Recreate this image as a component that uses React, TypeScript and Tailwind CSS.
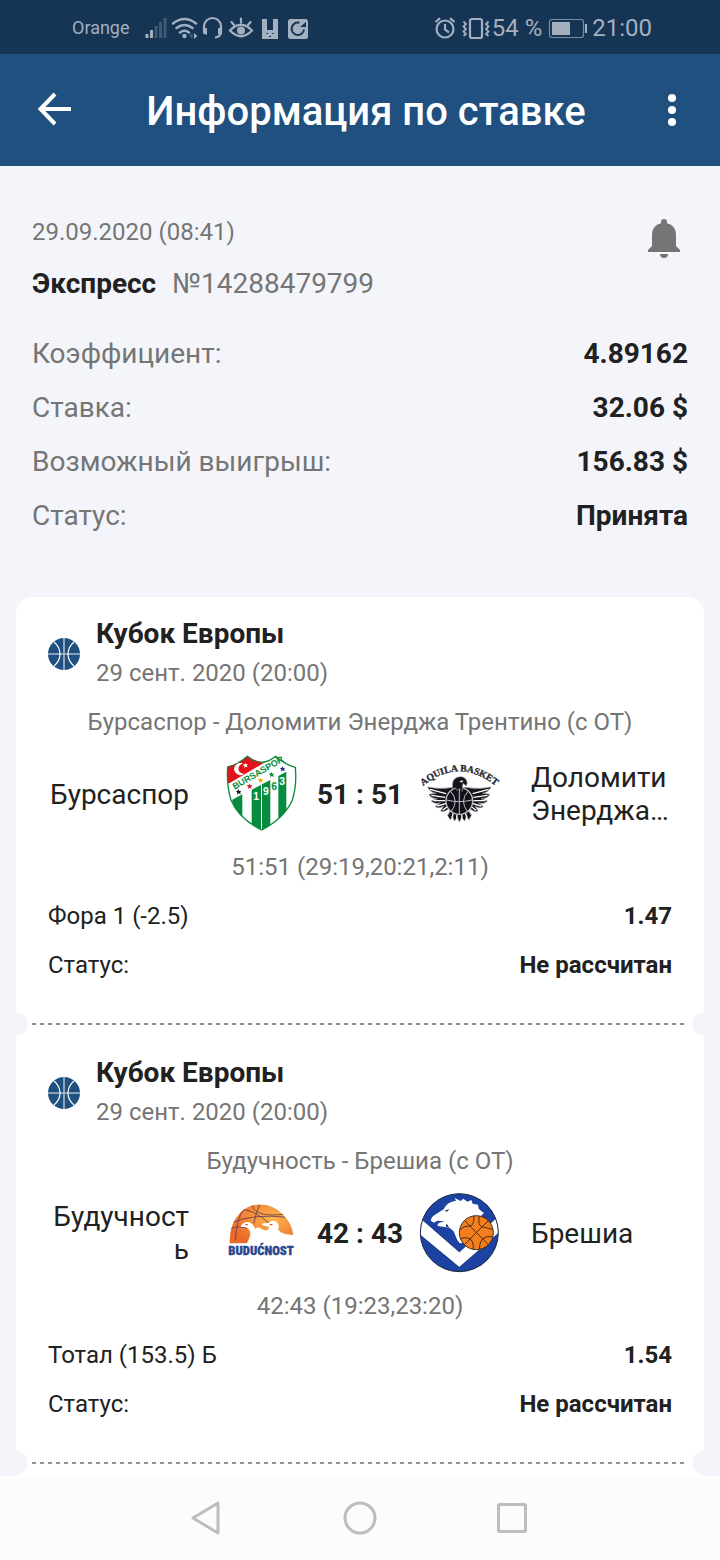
import type { ReactNode } from 'react'

const BET_ROWS = [
  { label: 'Коэффициент:', value: '4.89162' },
  { label: 'Ставка:', value: '32.06 $' },
  { label: 'Возможный выигрыш:', value: '156.83 $' },
  { label: 'Статус:', value: 'Принята' },
]

interface Game {
  id: number
  league: string
  date: string
  title: string
  home: string
  away: string
  homeLogo: ReactNode
  awayLogo: ReactNode
  score: string
  periods: string
  market: string
  odds: string
  status: string
}

function BursasporLogo() {
  return (
    <svg className="w-20 h-20" viewBox="18 27 240 240" role="img" aria-label="Бурсаспор">
      <defs>
        <clipPath id="bursa-shield">
          <path d="M38 66Q72 58 97 34Q118 51 140 52Q162 51 182 34Q208 58 241 67Q246 120 232 165Q208 220 140 255Q70 220 48 165Q34 120 38 66Z" />
        </clipPath>
      </defs>
      <g clipPath="url(#bursa-shield)">
        <path fill="#fff" d="M30 30h220v230H30z" />
        <g fill="#078c3f">
          <path d="M52 164L82 148V260H52z" />
          <path d="M110 134L138 120V260H110z" />
          <path d="M141 118L166 105V260H141z" />
          <path d="M190 93L214 80V260H190z" />
        </g>
        <path fill="#e3121b" d="M30 30h156L170 40L48 112L30 118z" />
      </g>
      <path d="M38 66Q72 58 97 34Q118 51 140 52Q162 51 182 34Q208 58 241 67Q246 120 232 165Q208 220 140 255Q70 220 48 165Q34 120 38 66Z" fill="none" stroke="#078c3f" strokeWidth="4" />
      <path d="M40 66Q72 58 97 36Q118 52 140 53" fill="none" stroke="#8f3a20" strokeWidth="3" />
      {/* crescent */}
      <path fill="#fff" d="M84 56A18 18 0 1 0 87 86A15 15 0 1 1 84 56z" />
      <path fill="#fff" d="M91 53l2 5 6-1-4 5 3 5-6-2-4 4v-6l-5-3 6-2z" />
      <text x="59" y="134" transform="rotate(-30 59 134)" fontFamily="Liberation Sans, sans-serif" fontSize="27" fontWeight="700" fill="#078c3f">BURSASPOR</text>
      <path fill="#111" d="M70 132l3 6 6-1-4 5 3 6-7-3-5 4 1-7-5-4 7-1z" />
      <path fill="#e3121b" d="M103 115l3 6 6-1-4 5 3 6-7-3-5 4 1-7-5-4 7-1z" />
      <path fill="#f5a91c" d="M136 97l3 6 6-1-4 5 3 6-7-3-5 4 1-7-5-4 7-1z" />
      <path fill="#078c3f" d="M169 80l3 6 6-1-4 5 3 6-7-3-5 4 1-7-5-4 7-1z" />
      <path fill="#1c2b86" d="M202 63l3 6 6-1-4 5 3 6-7-3-5 4 1-7-5-4 7-1z" />
      <g fontFamily="Liberation Sans, sans-serif" fontSize="31" fontWeight="700" fill="#fff">
        <text x="115" y="164">1</text>
        <text x="144" y="149">9</text>
        <text x="169" y="135" fill="#078c3f">6</text>
        <text x="193" y="119">3</text>
      </g>
    </svg>
  )
}

function AquilaLogo() {
  return (
    <svg className="w-20 h-20 overflow-visible" viewBox="27 12 240 240" role="img" aria-label="Доломити Энерджа Трентино">
      <defs>
        <path id="aquila-arc" d="M30 116Q148 12 266 116" />
      </defs>
      <text fontFamily="Liberation Serif, serif" fontSize="29" fontWeight="700" fill="#2a2a30" stroke="#2a2a30" strokeWidth="1">
        <textPath href="#aquila-arc" startOffset="50%" textAnchor="middle">AQUILA BASKET</textPath>
      </text>
      <g fill="#15151c" stroke="#8d8d92" strokeWidth="2">
        <path d="M122 113Q88 119 53 111Q60 127 79 130L57 133Q64 147 83 146L64 153Q74 164 91 158L76 170Q88 177 101 168L92 183Q103 187 114 178L132 184L135 112z" />
        <path d="M174 113Q208 119 243 111Q236 127 217 130L239 133Q232 147 213 146L232 153Q222 164 205 158L220 170Q208 177 195 168L204 183Q193 187 182 178L164 184L161 112z" />
        <path d="M120 184L113 197L121 209L128 198L133 213L142 202L148 216L155 202L164 213L169 198L177 209L184 196L176 184z" />
      </g>
      <g fill="none" stroke="#fff" strokeWidth="4">
        <path d="M60 118L108 131M64 136L106 142M70 152L106 152M82 168L110 160M98 181L114 168" />
        <path d="M236 118L188 131M232 136L190 142M226 152L190 152M214 168L186 160M198 181L182 168" />
        <path d="M126 202L130 190M140 206L141 193M156 206L155 193M171 202L166 190" />
      </g>
      <circle cx="148" cy="153" r="40" fill="#11111a" stroke="#bdbdc2" strokeWidth="4" />
      <path d="M148 114v78M110 150Q148 160 186 150M122 124Q148 153 124 184M174 124Q148 153 172 184" fill="none" stroke="#bdbdc2" strokeWidth="3" />
      <path d="M128 116Q124 88 142 82Q160 76 169 90Q174 98 169 108L160 100L157 109Q160 116 157 124L148 116L141 122L137 114z" fill="#15151c" stroke="#8d8d92" strokeWidth="2" />
      <path d="M148 94l12-3-4 7z" fill="#fff" />
    </svg>
  )
}

function BuducnostLogo() {
  return (
    <svg className="w-20 h-20" viewBox="18 9 240 240" role="img" aria-label="Будучность">
      <defs>
        <radialGradient id="bud-ball" cx="68%" cy="35%" r="70%">
          <stop offset="0" stopColor="#fdb64c" />
          <stop offset="1" stopColor="#ea6a2b" />
        </radialGradient>
        <clipPath id="bud-clip">
          <path d="M43 152Q42 101 79 68Q109 42 149 44Q192 43 224 73Q253 101 256 135L240 154Z" />
        </clipPath>
      </defs>
      <g transform="translate(6 0) scale(0.88 1)">
        <path d="M43 160Q42 101 79 68Q109 42 149 44Q192 43 224 73Q256 101 260 134L256 160Z" fill="url(#bud-ball)" />
        <g clipPath="url(#bud-clip)" fill="none" stroke="#5c3557" strokeWidth="2.5">
          <path d="M88 58Q150 64 218 138M120 46Q130 84 235 72M48 99Q120 70 244 82M45 117Q76 104 104 116M91 60Q70 76 62 152M145 45Q132 70 126 100" />
        </g>
        <path d="M84 104Q94 94 110 97Q122 101 130 116Q139 109 151 116L161 121Q176 122 178 111L157 106L152 102Q164 98 176 99Q187 88 202 95Q214 104 210 117Q213 127 237 132Q252 135 262 135L262 162H100Q116 140 112 124Q106 113 93 111L81 111z" fill="#fff" />
        <path d="M97 104h8M180 104h9" stroke="#e84d29" strokeWidth="4" />
        <path d="M104 114Q115 122 112 142M207 114Q210 127 236 132" fill="none" stroke="#ee8a50" strokeWidth="2" />
      </g>
      <text x="40" y="195" fontFamily="Roboto Condensed, Liberation Sans Narrow, Roboto, sans-serif" fontSize="38" fontWeight="900" fill="#29478f" stroke="#29478f" strokeWidth="1">
        BUDUĆNOST
      </text>
    </svg>
  )
}

function BresciaLogo() {
  return (
    <svg className="w-20 h-20" viewBox="27 21 240 240" role="img" aria-label="Брешиа">
      <defs>
        <clipPath id="brescia-clip">
          <circle cx="148" cy="140" r="117" />
        </clipPath>
      </defs>
      <circle cx="148" cy="140" r="117" fill="#1c43a1" />
      <g clipPath="url(#brescia-clip)">
        <path d="M22 88L148 198L274 82V134L148 244L22 140Z" fill="#fff" stroke="#0c2360" strokeWidth="2" />
        <path d="M62 104Q64 92 75 86L101 70Q110 48 138 44L134 36L152 45L160 38L172 47L184 42L188 53L204 56L206 68L222 82L214 88L219 100L166 140L156 172Q146 172 140 158L132 138Q124 126 110 124L84 120Q80 114 88 110L104 106L82 104L72 110Z" fill="#fff" />
        <path d="M110 113l8 12-11-4zM104 74l14-5-7 8z" fill="#0c2360" />
      </g>
      <circle cx="199" cy="140" r="51" fill="#f47d1c" stroke="#40301f" strokeWidth="3" />
      <path d="M164 104L235 176M235 104L163 176M192 90Q194 108 185 119L165 122Q156 124 151 132M207 91V113Q211 124 229 125L247 130M152 158Q163 152 178 157Q191 164 190 190M247 152Q231 149 218 158Q208 169 208 189" fill="none" stroke="#40301f" strokeWidth="3" />
      <circle cx="148" cy="140" r="117" fill="none" stroke="#16263f" strokeWidth="3" />
    </svg>
  )
}

const GAMES: Game[] = [
  {
    id: 1,
    league: 'Кубок Европы',
    date: '29 сент. 2020 (20:00)',
    title: 'Бурсаспор - Доломити Энерджа Трентино (с ОТ)',
    home: 'Бурсаспор',
    away: 'Доломити Энерджа…',
    homeLogo: <BursasporLogo />,
    awayLogo: <AquilaLogo />,
    score: '51 : 51',
    periods: '51:51 (29:19,20:21,2:11)',
    market: 'Фора 1 (-2.5)',
    odds: '1.47',
    status: 'Не рассчитан',
  },
  {
    id: 2,
    league: 'Кубок Европы',
    date: '29 сент. 2020 (20:00)',
    title: 'Будучность - Брешиа (с ОТ)',
    home: 'Будучность',
    away: 'Брешиа',
    homeLogo: <BuducnostLogo />,
    awayLogo: <BresciaLogo />,
    score: '42 : 43',
    periods: '42:43 (19:23,23:20)',
    market: 'Тотал (153.5) Б',
    odds: '1.54',
    status: 'Не рассчитан',
  },
]

function StatusBar() {
  return (
    <div className="h-[54px] pt-[2px] bg-[#163453] text-[#a3b0c0] flex items-center justify-between pl-[72px] pr-[68px]">
      <div className="flex items-center">
        <span className="text-lg">Orange</span>
        <svg className="w-[184px] h-6 ml-3" viewBox="0 0 184 24" fill="none" stroke="currentColor" aria-hidden="true">
          {/* signal */}
          <g strokeWidth="3">
            <path d="M5 22v-4M9.500 22v-8" />
            <path d="M14 22V10M18.500 22V6M23 22V2" opacity=".3" />
          </g>
          {/* wifi */}
          <g transform="translate(-1 0)">
            <path d="M32 7.500Q43.500-1.500 55 7.500M35.500 12Q43.500 6 51.500 12M39 16.500Q43.500 13 48 16.500" strokeWidth="2.500" strokeLinecap="round" />
            <circle cx="43.500" cy="20" r="2.200" fill="currentColor" stroke="none" />
            <path d="M53 17v6l3.500-3z" fill="currentColor" stroke="none" />
            <path d="M51.500 17v6l-3-3z" fill="currentColor" stroke="none" opacity=".4" />
          </g>
          <g transform="translate(-2 0)">
            {/* headset */}
            <path d="M64 17V10.500a8.500 8.500 0 0 1 17 0V17Q80 21 75 21.500" strokeWidth="2.200" />
            <path d="M67 12v6.500h-1.500a2.500 2.500 0 0 1-2.500-2.500V12zM78 12v6.500h1.500a2.500 2.500 0 0 0 2.500-2.500V12z" fill="currentColor" stroke="none" />
            {/* eye */}
            <path d="M90 14.500Q101 3 112 14.500Q101 26 90 14.500z" strokeWidth="2.300" />
            <circle cx="101" cy="14.500" r="4" fill="currentColor" stroke="none" />
            <path d="M101 2.500v4M91.500 6l2.500 3M110.500 6L108 9" strokeWidth="2.200" strokeLinecap="round" />
            {/* bunny */}
            <path d="M122 23V3h5v11h6V3h5v20z" fill="currentColor" stroke="none" />
            <path d="M126.500 17.500h1.500M132 17.500h1.500M129 20.500h2" stroke="#163453" strokeWidth="1.200" />
            {/* sync */}
            <rect x="148" y="3" width="20" height="20" rx="2.500" fill="currentColor" stroke="none" />
            <path d="M159.500 6.800A6.200 6.200 0 1 0 164 13.500" stroke="#163453" strokeWidth="2" />
            <path d="M160 11h6V6z" fill="#163453" stroke="none" />
          </g>
        </svg>
      </div>
      <div className="flex items-center text-2xl">
        <svg className="w-[58px] h-6" viewBox="0 0 58 24" fill="none" stroke="currentColor" strokeWidth="2.200" aria-hidden="true">
          <circle cx="11" cy="13" r="8.500" />
          <path d="M11 8v5.500l4 3M1.500 6L6 2.200M20.500 6L16 2.200" />
          <rect x="36" y="3" width="12" height="19" rx="2" />
          <path d="M29.500 5.500l2.500 2.500-2.500 2.500 2.500 2.500-2.500 2.500 2.500 2.500-2.500 2M54.500 5.500L52 8l2.500 2.500-2.500 2.500 2.500 2.500-2.500 2.500 2.500 2" strokeWidth="1.800" />
        </svg>
        <span>54 %</span>
        <svg className="w-10 h-6 mx-[5px]" viewBox="0 0 40 24" fill="none" stroke="currentColor" aria-hidden="true">
          <rect x="2.500" y="3.500" width="34" height="18" rx="2.500" strokeWidth="1.200" opacity=".7" />
          <rect x="5" y="6" width="18" height="13" fill="currentColor" stroke="none" />
          <path d="M39 8v9" strokeWidth="2" />
        </svg>
        <span>21:00</span>
      </div>
    </div>
  )
}

function BasketballIcon() {
  return (
    <svg className="w-8 h-8" viewBox="0 0 32 32" fill="none" aria-hidden="true">
      <circle cx="16" cy="16" r="16" fill="#20507f" />
      <path d="M0 16h32M16 0v32" stroke="#a9bccf" strokeWidth="1.600" />
      <path d="M6 4Q12 9 12 16T6 28M26 4Q20 9 20 16T26 28" stroke="#fff" strokeWidth="1.200" />
    </svg>
  )
}

function TicketDivider() {
  return (
    <div className="flex items-center justify-between h-6 overflow-hidden -mx-8">
      <span className="w-6 h-6 rounded-full bg-[#f4f5fa] -ml-3" />
      <svg className="flex-1 h-[2px] ml-1 mr-2" aria-hidden="true">
        <line x1="0" y1="1" x2="100%" y2="1" stroke="#8f8f8f" strokeWidth="2" strokeDasharray="4 4" />
      </svg>
      <span className="w-6 h-6 rounded-full bg-[#f4f5fa] -mr-3" />
    </div>
  )
}

function GameCard({ game }: { game: Game }) {
  return (
    <article className="px-8 pt-[21px] text-2xl leading-8">
      <div className="flex items-center gap-4">
        <BasketballIcon />
        <div>
          <h2 className="text-[28px] leading-8 font-bold">{game.league}</h2>
          <p className="mt-[7px] text-[#757575]">{game.date}</p>
        </div>
      </div>

      <p className="mt-[17px] text-center text-[#757575]">{game.title}</p>

      <div className="mt-4 h-20 grid grid-cols-[1fr_80px_118px_80px_1fr] items-center text-[28px] leading-[33px]">
        <p className="pr-8 text-right wrap-anywhere">{game.home}</p>
        {game.homeLogo}
        <p className="text-center font-bold">{game.score}</p>
        {game.awayLogo}
        <p className="pl-8">{game.away}</p>
      </div>

      <p className="mt-[17px] text-center text-[#757575]">{game.periods}</p>

      <dl className="mt-[17px] mb-[31px] space-y-[17px]">
        <div className="flex justify-between">
          <dt>{game.market}</dt>
          <dd className="font-bold">{game.odds}</dd>
        </div>
        <div className="flex justify-between">
          <dt>Статус:</dt>
          <dd className="font-bold">{game.status}</dd>
        </div>
      </dl>

      <TicketDivider />
    </article>
  )
}

export default function App() {
  return (
    <div className="min-h-screen flex flex-col bg-[#f4f5fa] text-[#212121] font-[Roboto,sans-serif]">
      <StatusBar />

      <header className="h-28 bg-[#20507f] text-white flex items-center justify-between pl-8 pr-8">
        <button type="button" aria-label="Назад" className="w-12 h-12">
          <svg className="w-12 h-12" viewBox="0 0 48 48" fill="none" stroke="currentColor" strokeWidth="4" aria-hidden="true">
            <path d="M39 23H9M23 8L8.500 23L23 38" />
          </svg>
        </button>
        <h1 className="pt-1 pr-1 text-[40px] leading-[48px] font-medium">Информация по ставке</h1>
        <button type="button" aria-label="Меню" className="w-8 h-12">
          <svg className="w-8 h-12" viewBox="0 0 32 48" fill="currentColor" aria-hidden="true">
            <circle cx="16" cy="12" r="4" />
            <circle cx="16" cy="24" r="4" />
            <circle cx="16" cy="36" r="4" />
          </svg>
        </button>
      </header>

      <main className="flex-1 flex flex-col">
        <section className="px-8 pt-[50px] pb-[65px]">
          <div className="flex justify-between">
            <div>
              <p className="text-2xl leading-8 text-[#757575]">29.09.2020 (08:41)</p>
              <p className="mt-5 text-[28px] leading-8 text-[#757575]">
                <span className="font-bold text-[#212121] mr-4">Экспресс</span>
                №14288479799
              </p>
            </div>
            <button type="button" aria-label="Уведомления" className="w-12 h-12">
              <svg className="w-12 h-12" viewBox="0 0 48 48" fill="#757575" aria-hidden="true">
                <path d="M24 3a3 3 0 0 1 3 3v1.300Q36 9.500 36 19v11l4 4v2H8v-2l4-4V19Q12 9.500 21 7.300V6a3 3 0 0 1 3-3zM20 38h8a4 4 0 0 1-8 0z" />
              </svg>
            </button>
          </div>

          <dl className="mt-[38px] space-y-[22px] text-[28px] leading-8">
            {BET_ROWS.map((row) => (
              <div key={row.label} className="flex justify-between">
                <dt className="text-[#757575]">{row.label}</dt>
                <dd className="font-bold">{row.value}</dd>
              </div>
            ))}
          </dl>
        </section>

        <section className="flex-1 mx-4 bg-white rounded-t-2xl">
          {GAMES.map((game) => (
            <GameCard key={game.id} game={game} />
          ))}
        </section>
      </main>

      <nav className="h-[84px] bg-[#fcfcfc] flex items-center justify-center gap-[104px] text-[#bdbdbd]">
        <button type="button" aria-label="Назад">
          <svg className="w-12 h-12" viewBox="0 0 48 48" fill="none" stroke="currentColor" strokeWidth="3" strokeLinejoin="round" aria-hidden="true">
            <path d="M34 9v30L9 24z" />
          </svg>
        </button>
        <button type="button" aria-label="Домой">
          <svg className="w-12 h-12" viewBox="0 0 48 48" fill="none" stroke="currentColor" strokeWidth="3" aria-hidden="true">
            <circle cx="24" cy="24" r="15" />
          </svg>
        </button>
        <button type="button" aria-label="Недавние">
          <svg className="w-12 h-12" viewBox="0 0 48 48" fill="none" stroke="currentColor" strokeWidth="3" aria-hidden="true">
            <rect x="10.500" y="10.500" width="27" height="27" rx="1" />
          </svg>
        </button>
      </nav>
    </div>
  )
}
